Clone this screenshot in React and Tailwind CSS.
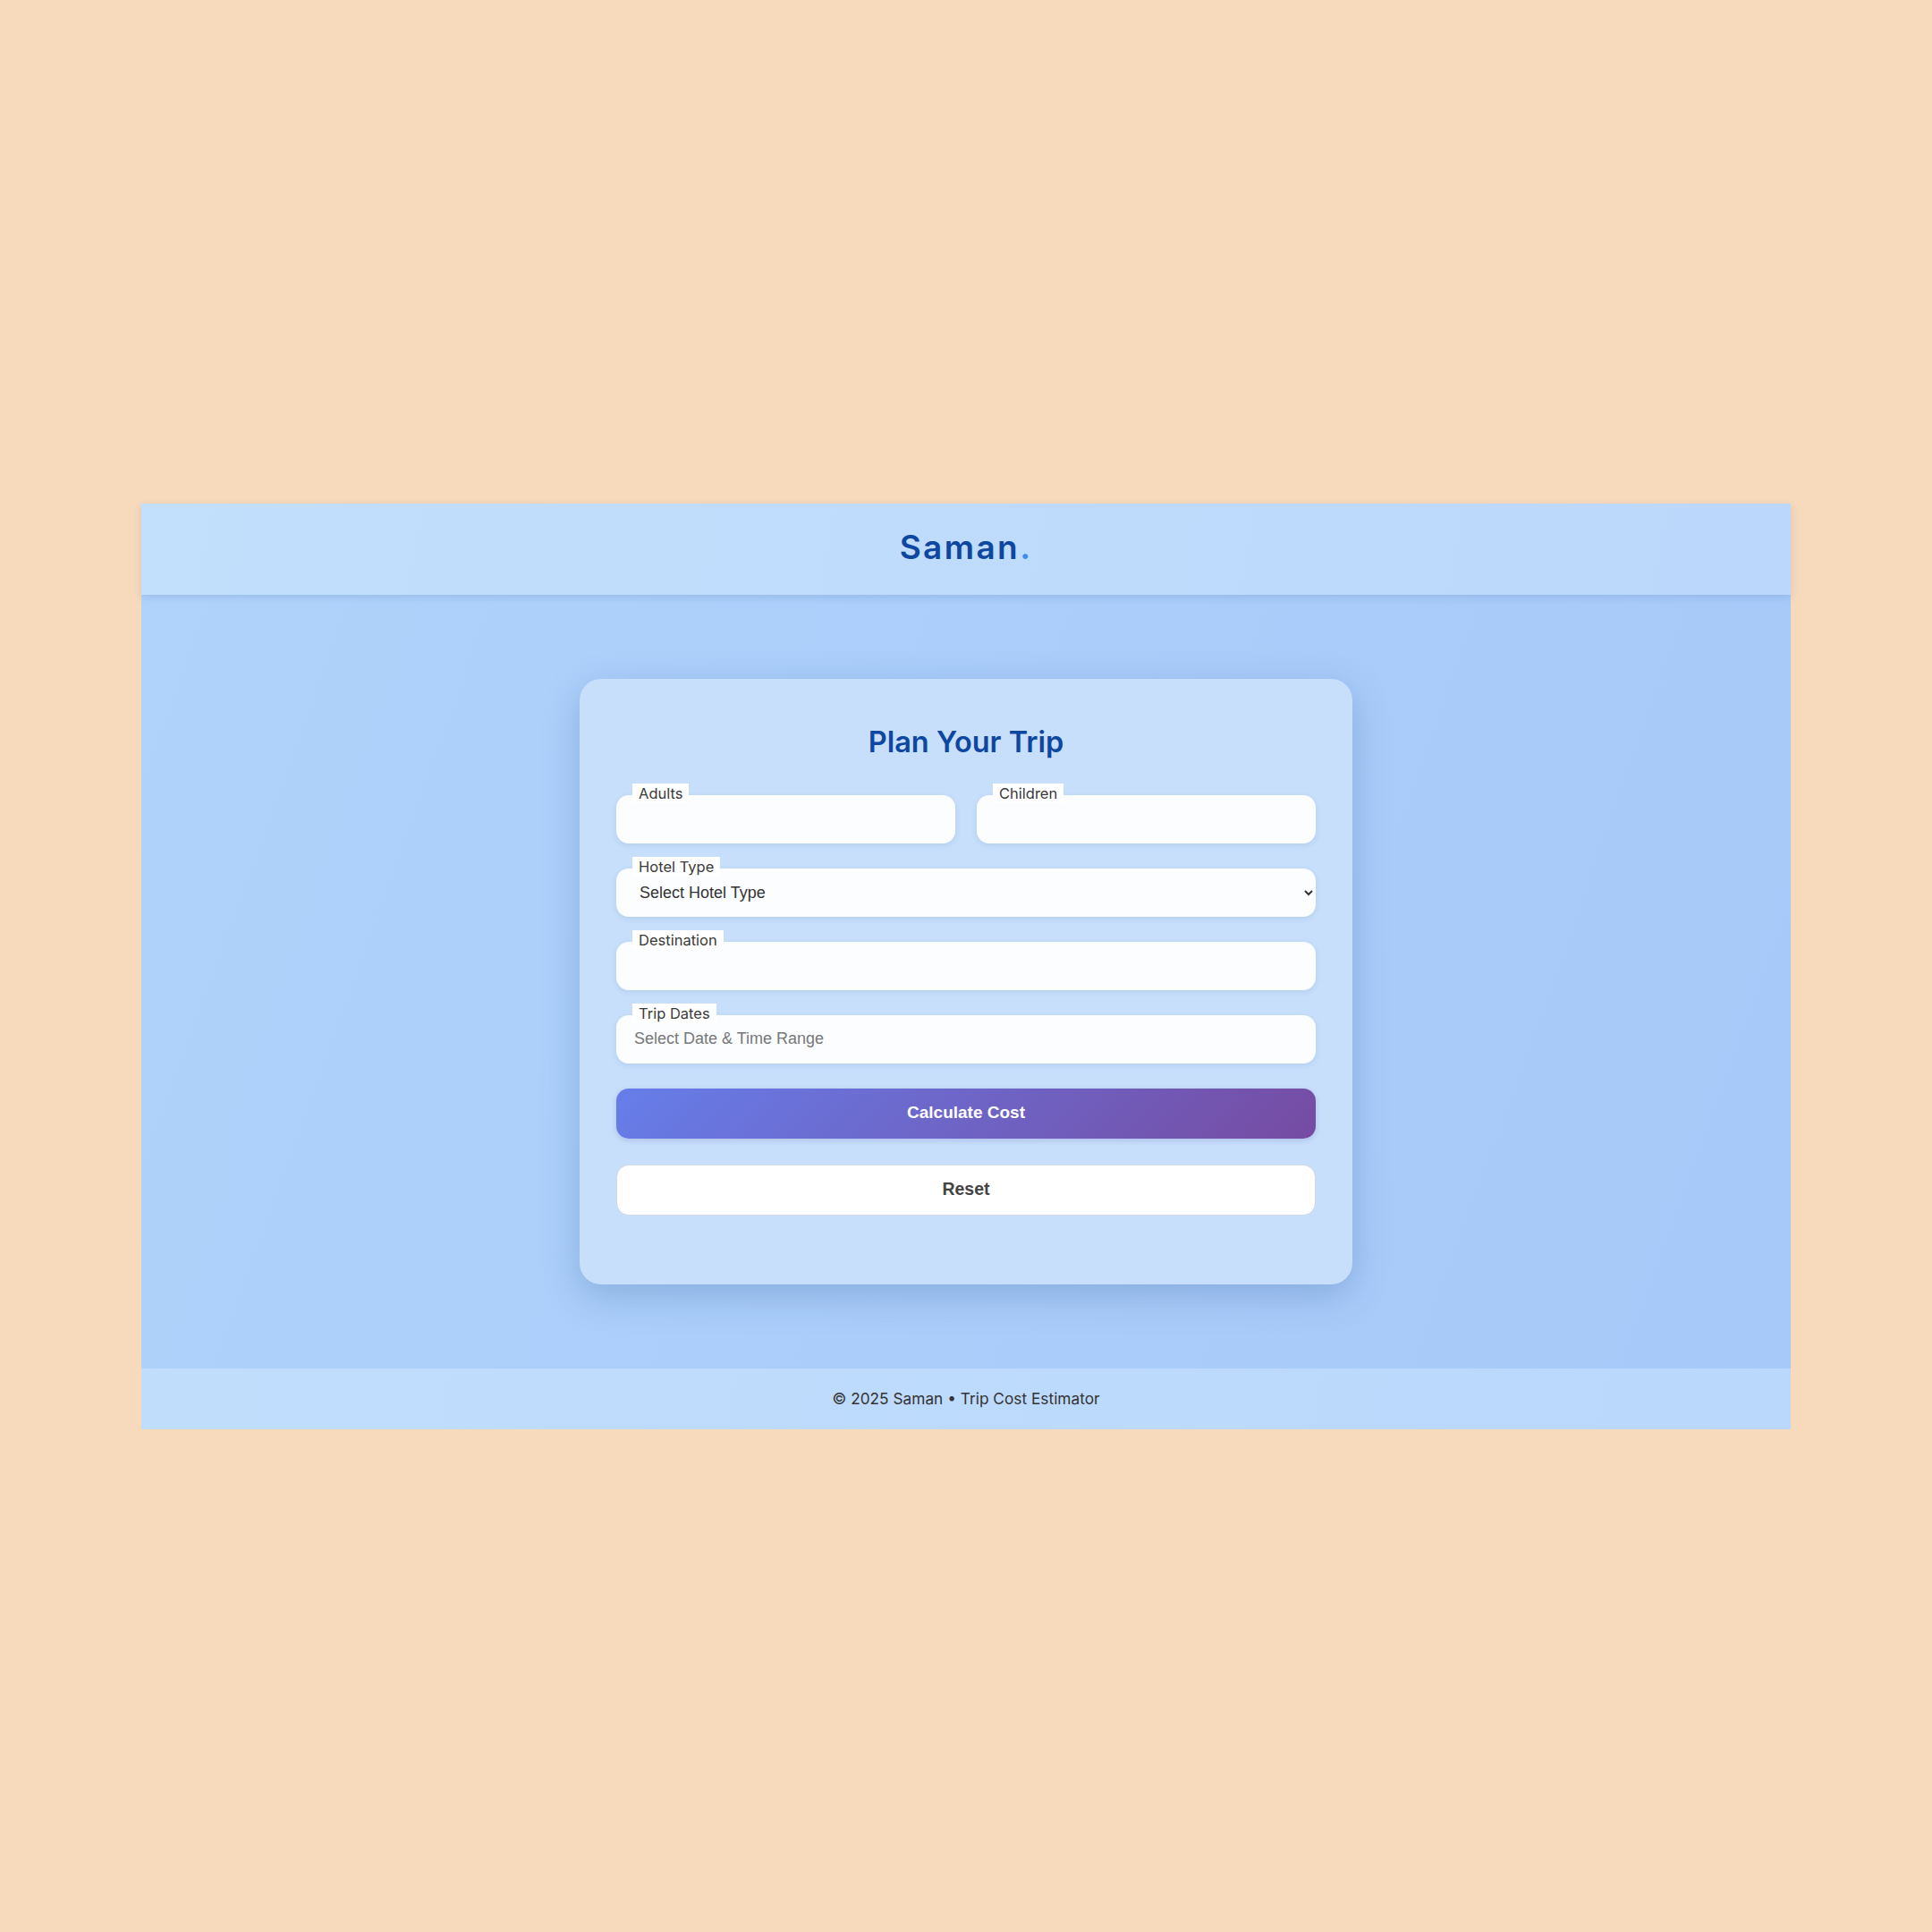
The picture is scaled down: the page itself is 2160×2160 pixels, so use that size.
import React from "react";

const poppins = "font-['Inter','Noto_Sans',sans-serif]";
const arial = "font-['Liberation_Sans',Arial,sans-serif]";

function Field({ label, children, className = "" }) {
  return (
    <div className={"relative " + className}>
      <label
        className={`absolute top-[-13px] left-[18px] z-10 bg-white px-[7px] text-[16.5px] leading-[22px] font-normal text-[#3a3a3a] ${poppins}`}
      >
        {label}
      </label>
      {children}
    </div>
  );
}

const inputCls = `block h-[54px] w-full rounded-[14px] bg-[#fbfdff] px-5 text-[18px] text-[#333] shadow-[0_2px_6px_rgba(40,80,140,0.12)] outline-none placeholder:text-[#777] ${arial}`;

export default function App() {
  return (
    <div className="flex min-h-screen w-full items-center justify-center bg-[#f7d9bc]">
      <div className="flex w-[1844px] flex-col">
        <header className="relative z-10 flex h-[102px] items-center justify-center bg-[linear-gradient(100deg,#c2dffc_0%,#bbd8fc_100%)] pb-[5px] shadow-[0_3px_8px_rgba(60,100,160,0.18)]">
          <h1 className={`text-[37px] font-semibold leading-none tracking-[2.4px] text-[#0d47a1] ${poppins}`}>
            Saman<span className="text-[#3d8bf0]">.</span>
          </h1>
        </header>
        <main className="flex justify-center bg-[linear-gradient(110deg,#b0d3fb_0%,#aacdfa_50%,#a6c9f9_100%)] py-[94px]">
          <div className="w-[864px] rounded-[24px] bg-[#c7dffb] px-[41px] pt-12 pb-[77px] shadow-[0_12px_40px_rgba(50,90,150,0.28)]">
            <h2 className={`mb-[36px] text-center text-[32.5px] font-semibold leading-[46px] text-[#0d47a1] ${poppins}`}>
              Plan Your Trip
            </h2>
            <div className="mb-[28px] grid grid-cols-2 gap-6">
              <Field label="Adults">
                <input type="number" className={inputCls} />
              </Field>
              <Field label="Children">
                <input type="number" className={inputCls} />
              </Field>
            </div>
            <Field label="Hotel Type" className="mb-[28px]">
              <select className={`block h-[54px] w-full rounded-[14px] bg-[#fbfdff] pl-[22px] pr-[6px] text-[18px] text-[#333] shadow-[0_2px_6px_rgba(40,80,140,0.12)] outline-none ${arial}`} defaultValue="">
                <option value="">Select Hotel Type</option>
                <option value="budget">Budget</option>
                <option value="standard">Standard</option>
                <option value="luxury">Luxury</option>
              </select>
            </Field>
            <Field label="Destination" className="mb-[28px]">
              <input type="text" className={inputCls} />
            </Field>
            <Field label="Trip Dates" className="mb-[28px]">
              <input type="text" placeholder="Select Date & Time Range" className={inputCls} />
            </Field>
            <button className={`mb-[29px] block h-[56px] w-full rounded-[14px] bg-[linear-gradient(135deg,#667eea_0%,#764ba2_100%)] text-[19px] font-bold text-white shadow-[0_2px_6px_rgba(80,60,160,0.2)] ${arial}`}>
              Calculate Cost
            </button>
            <button className={`block h-[57px] w-full rounded-[14px] border border-[#cfd8e3] bg-white text-[19.5px] font-bold text-[#444] ${arial}`}>
              Reset
            </button>
          </div>
        </main>
        <footer className={`flex h-[68px] items-center justify-center bg-[linear-gradient(100deg,#c0ddfc_0%,#bad8fc_100%)] text-[17.3px] text-[#333] ${poppins}`}>
          © 2025 Saman • Trip Cost Estimator
        </footer>
      </div>
    </div>
  );
}
